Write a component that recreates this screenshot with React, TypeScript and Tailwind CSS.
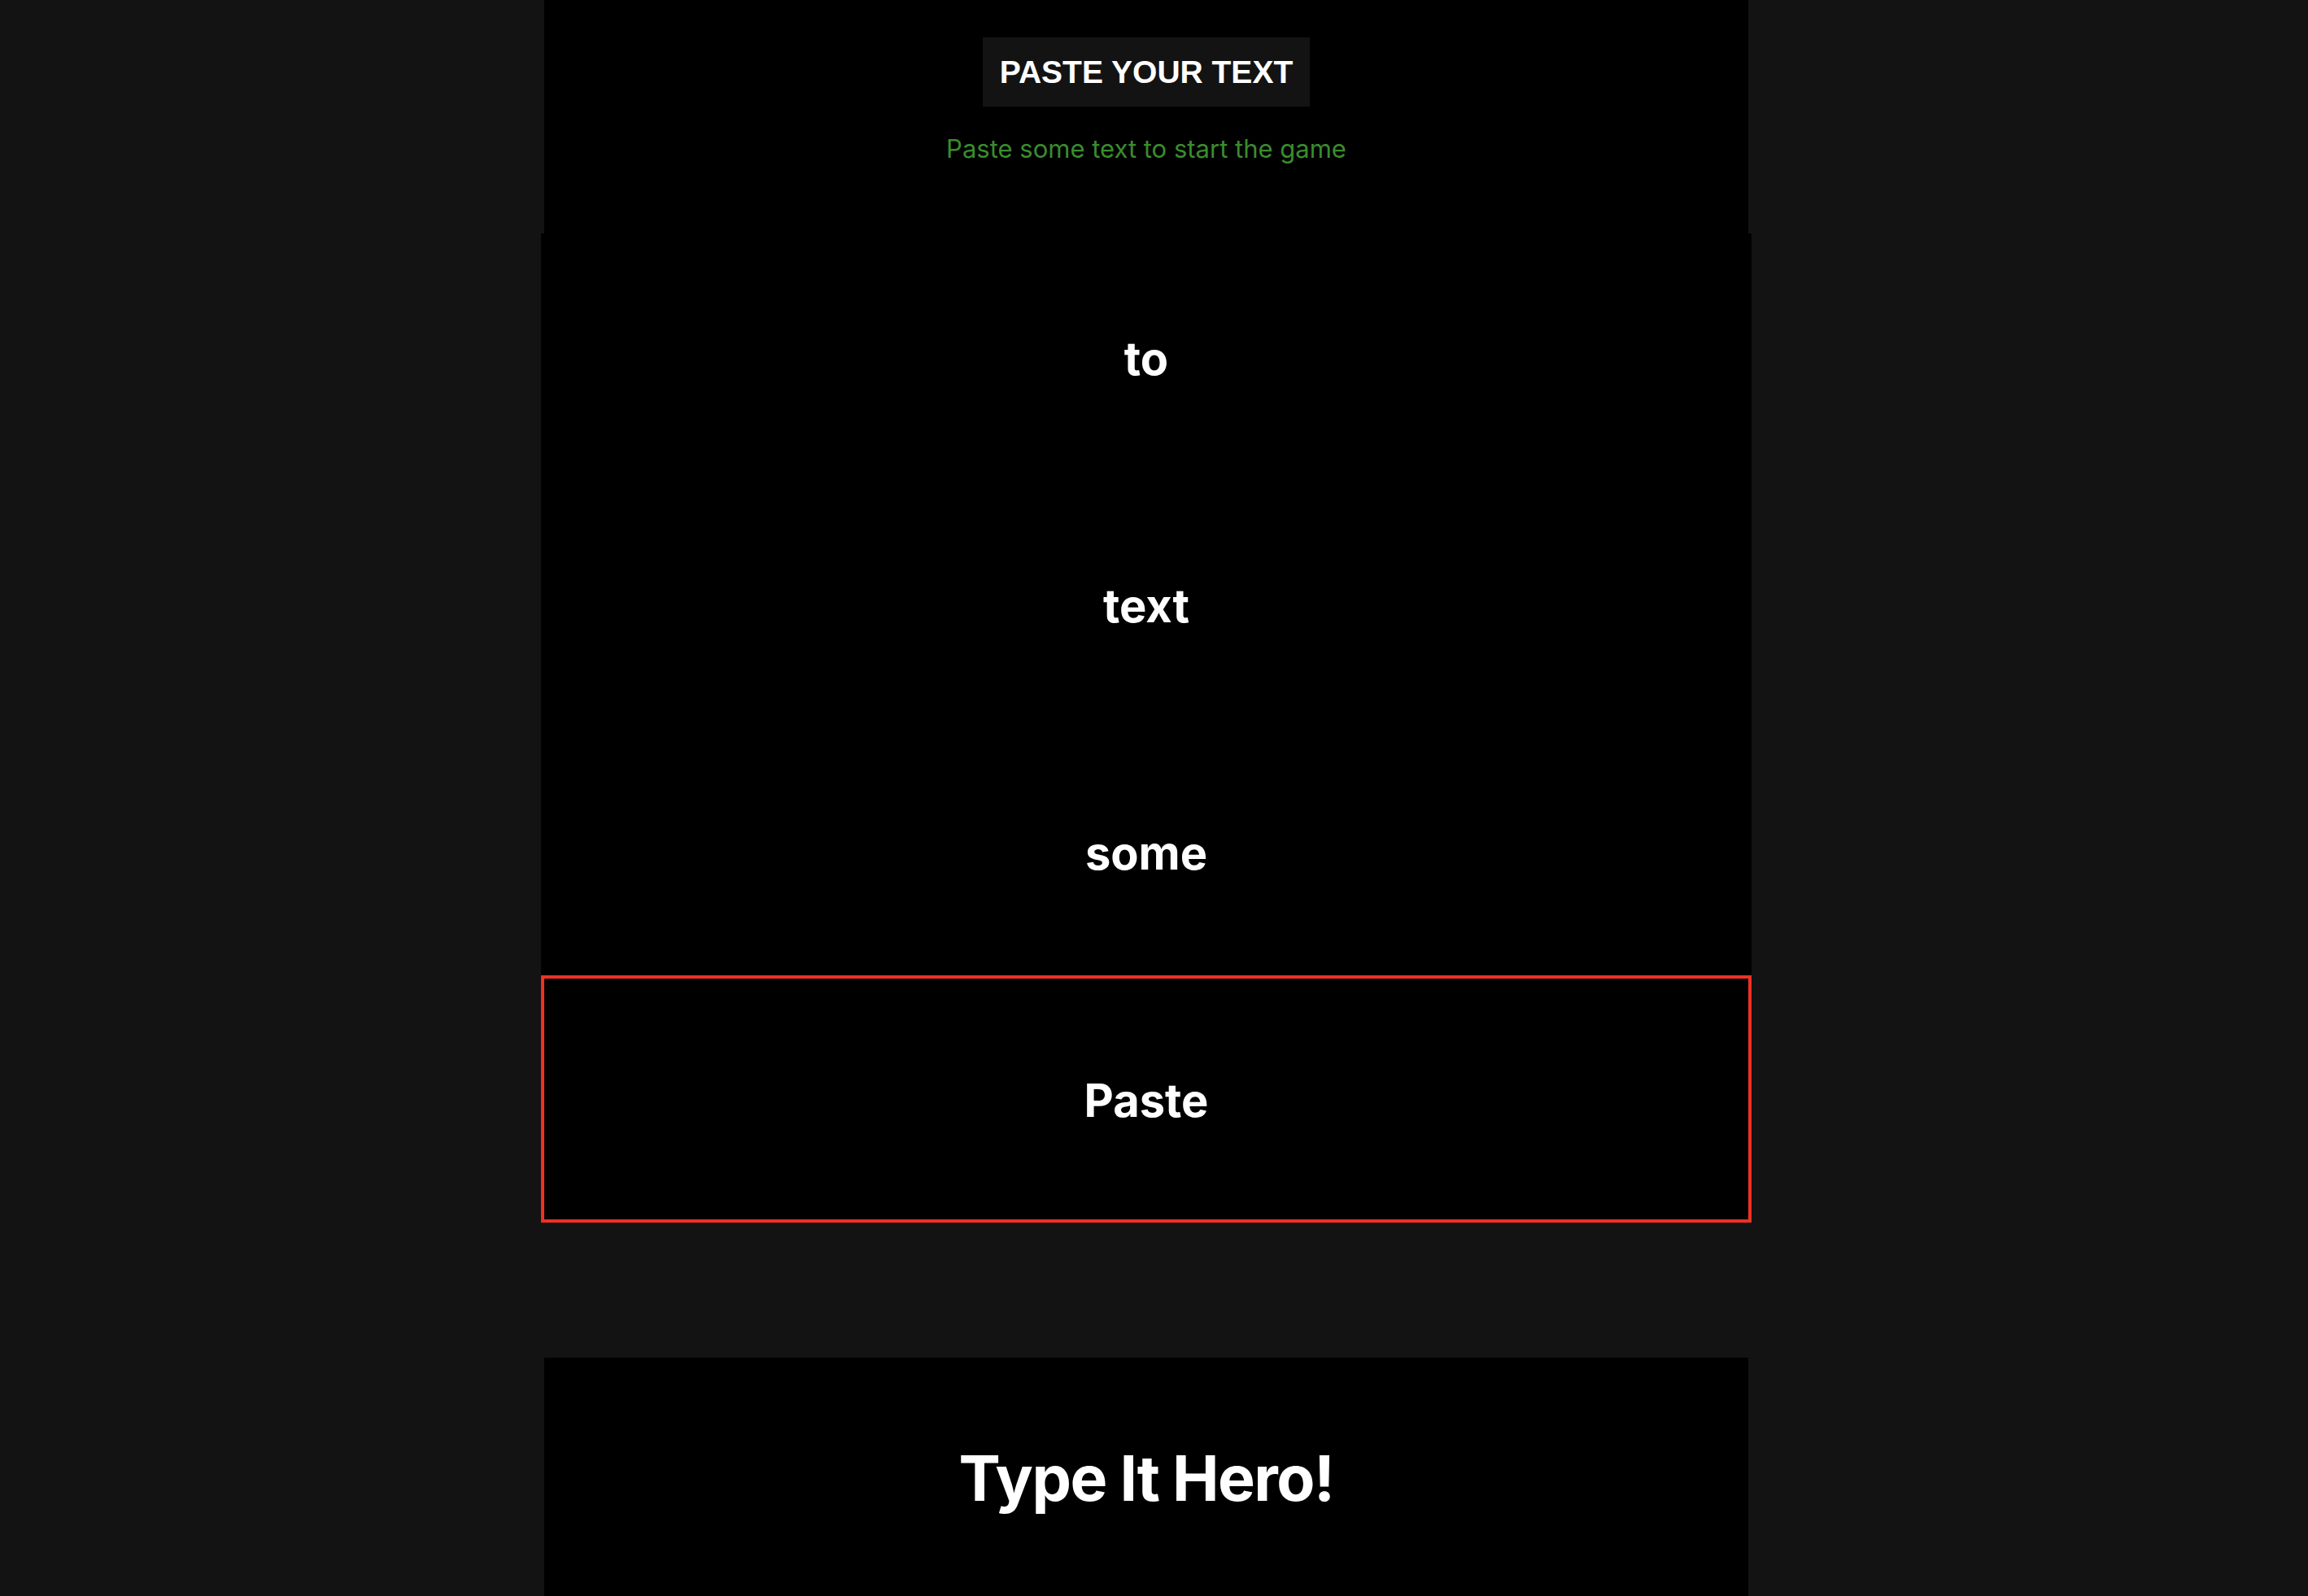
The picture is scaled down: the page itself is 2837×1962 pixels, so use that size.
const WORDS = ['to', 'text', 'some', 'Paste']

export default function App() {
  return (
    <div className="min-h-screen bg-[#131313] flex flex-col items-center pr-[19px]">
      {/* Header */}
      <div className="w-[1480px] h-[287px] bg-black flex flex-col items-center pt-[46px]">
        <button
          className="h-[85px] px-[21px] bg-[#131313] text-white font-bold text-[39px] leading-none uppercase"
          style={{ fontFamily: '"Liberation Sans", Arial, sans-serif' }}
        >
          Paste your text
        </button>
        <p
          className="mt-[28px] text-[31px] leading-[48px] text-[#3a8c2d]"
          style={{ fontFamily: 'Inter, sans-serif' }}
        >
          Paste some text to start the game
        </p>
      </div>

      {/* Word stack */}
      <div className="w-[1488px] bg-black flex flex-col" style={{ fontFamily: 'Inter, sans-serif' }}>
        {WORDS.map((w, i) => (
          <div
            key={w}
            className={`h-[304px] pt-[3px] flex items-center justify-center border-4 ${
              i === WORDS.length - 1 ? 'border-[#ee3124]' : 'border-transparent'
            }`}
          >
            <span className="text-white font-bold text-[56px] leading-none">{w}</span>
          </div>
        ))}
      </div>

      {/* Title */}
      <div className="mt-[166px] w-[1480px] h-[320px] bg-black flex justify-center pt-[110px]">
        <h1
          className="text-white font-bold text-[77px] leading-none tracking-[-0.02em]"
          style={{ fontFamily: 'Inter, sans-serif' }}
        >
          Type It Hero!
        </h1>
      </div>
    </div>
  )
}
